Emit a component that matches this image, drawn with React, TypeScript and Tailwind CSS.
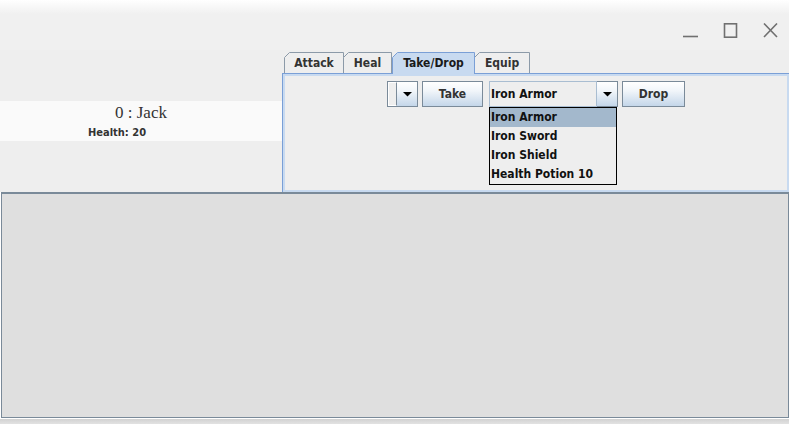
import React from "react";

type TabProps = {
  label: string;
  w: number;
  selected?: boolean;
  className: string;
};

const Tab = ({ label, w, selected, className }: TabProps) => {
  const h = selected ? 22 : 21;
  return (
    <div className={`relative flex justify-center ${selected ? "z-10 -mb-px" : ""} ${className}`}>
      <svg className="absolute inset-0" width={w} height={h}>
        <path
          d={`M0.5 ${h} V5.5 L5.5 0.5 H${w - 0.5} V${h}`}
          fill={selected ? "#c8daf0" : "#eeeeee"}
          stroke={selected ? "#7a9fd6" : "#8c9aa8"}
        />
      </svg>
      <span className={`relative mt-[4px] leading-[14px] ${selected ? "text-[#1a1a1a]" : "text-[#333333]"}`}>
        {label}
      </span>
    </div>
  );
};

const Arrow = () => (
  <svg width="9" height="5" viewBox="0 0 9 5">
    <path d="M0 0H9L4.5 4.5Z" fill="#000" />
  </svg>
);

const btn =
  "flex items-center justify-center border border-[#7a8a99] bg-[linear-gradient(#ffffff_0%,#f2f6fa_35%,#c4d6e9_100%)]";

const App = () => {
  return (
    <div className="w-[789px] h-[424px] overflow-hidden flex flex-col bg-[#eeeeee] font-['DejaVu_Sans_Condensed','DejaVu_Sans',sans-serif] font-bold text-[12px] text-[#333333]">
      {/* title bar */}
      <div className="h-[50px] flex justify-end items-start pt-[23px] pr-[11px] gap-[25px] bg-[linear-gradient(#ffffff_0px,#f0f0f0_14px)]">
        <svg width="15" height="15" viewBox="0 0 15 15">
          <path d="M0 13.5H15" stroke="#707070" strokeWidth="1.6" />
        </svg>
        <svg width="15" height="15" viewBox="0 0 15 15">
          <rect x="1.5" y="0.8" width="12" height="13.4" fill="none" stroke="#707070" strokeWidth="1.6" />
        </svg>
        <svg width="15" height="15" viewBox="0 0 15 15">
          <path d="M1 0.5L14 14M14 0.5L1 14" stroke="#707070" strokeWidth="1.6" />
        </svg>
      </div>

      {/* top row */}
      <div className="h-[142px] flex">
        <div className="w-[282px] pt-[51px]">
          <div className="h-[40px] bg-[#fafafa] flex flex-col">
            <div className="pt-[2px] text-center font-['Liberation_Serif',serif] font-normal text-[17px] leading-[20px] text-[#333333]">
              0 : Jack
            </div>
            <div className="mt-[3px] pl-[88px] text-[11px] leading-[13px] text-[#333333]">Health: 20</div>
          </div>
        </div>

        <div className="flex-1 flex flex-col">
          <div className="h-[23px] flex items-end pl-[2px]">
            <Tab label="Attack" w={60} className="w-[60px] h-[21px]" />
            <Tab label="Heal" w={49} className="w-[49px] h-[21px] -ml-px" />
            <Tab label="Take/Drop" w={83} selected className="w-[83px] h-[22px]" />
            <Tab label="Equip" w={56} className="w-[56px] h-[21px] -ml-px" />
          </div>
          <div className="flex-1 border-l border-t border-[#7a9fd6] flex">
            <div className="flex-1 border-[2px] border-[#c8daf0] pt-[5px] flex justify-center">
              <div className="flex h-[26px]">
                {/* empty combo */}
                <div className="w-[31px] flex border border-[#7a8a99]">
                  <div className="w-[9px] border border-white border-r-[#7a8a99] bg-[#eeeeee]" />
                  <div className="flex-1 flex items-center justify-center bg-[linear-gradient(#ffffff_0%,#f2f6fa_35%,#c4d6e9_100%)]">
                    <Arrow />
                  </div>
                </div>
                <div className={`${btn} w-[61px] ml-[4px] text-[#333333]`}>Take</div>
                {/* item combo */}
                <div className="relative w-[129px] ml-[6px] flex">
                  <div className="flex-1 border border-[#a9bdd1] bg-[#eeeeee] flex items-center pl-[1px] text-[#111111]">
                    Iron Armor
                  </div>
                  <div className={`${btn} w-[21px] border-l-0`}>
                    <Arrow />
                  </div>
                  <div className="absolute left-0 top-full w-[128px] border border-black bg-[#eeeeee] text-[#111111]">
                    <div className="h-[19px] leading-[19px] pl-[1px] bg-[#a3b8cc]">Iron Armor</div>
                    <div className="h-[19px] leading-[19px] pl-[1px]">Iron Sword</div>
                    <div className="h-[19px] leading-[19px] pl-[1px]">Iron Shield</div>
                    <div className="h-[19px] leading-[19px] pl-[1px]">Health Potion 10</div>
                  </div>
                </div>
                <div className={`${btn} w-[63px] ml-[4px] text-[#333333]`}>Drop</div>
              </div>
            </div>
          </div>
        </div>
      </div>

      {/* bottom panel */}
      <div className="h-[227px] border-l border-b border-white flex">
        <div className="flex-1 bg-[#dfdfdf] border-t-2 border-l border-r border-b border-[#7a8a99]" />
      </div>
      <div className="flex-1 bg-[linear-gradient(#d2d2d2,#e2e2e2)]" />
    </div>
  );
};

export default App;
